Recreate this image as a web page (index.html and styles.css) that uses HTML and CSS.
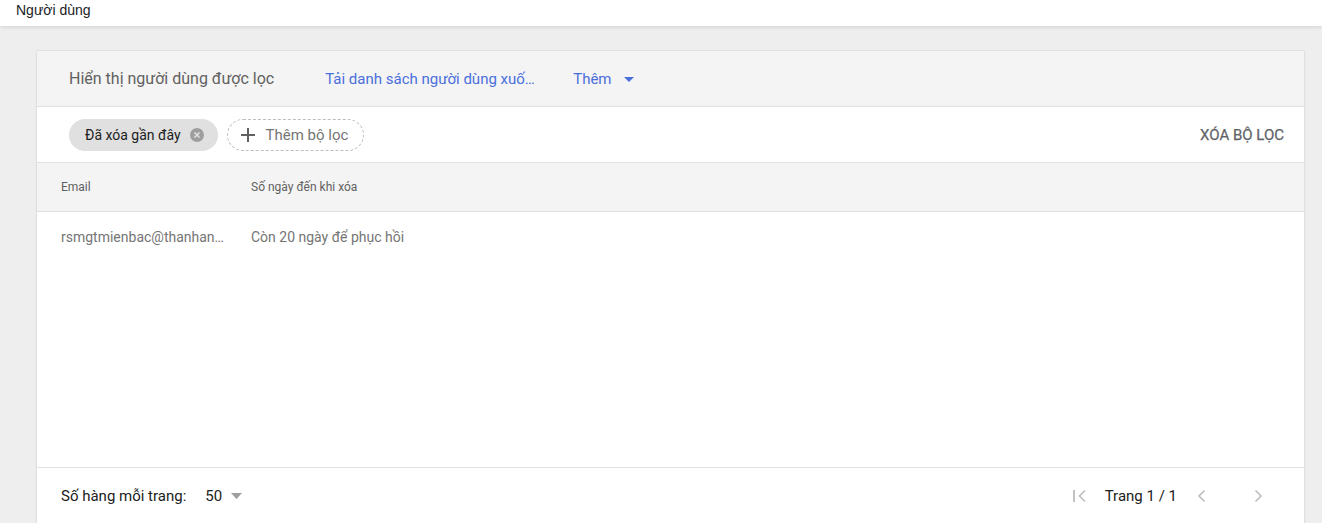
FILE: index.html
```html
<!DOCTYPE html>
<html lang="vi">
<head>
<meta charset="utf-8">
<title>Người dùng</title>
<link rel="stylesheet" href="styles.css">
</head>
<body>
<header class="topbar"><span class="topbar-title">Người dùng</span></header>
<main class="main">
  <section class="card">
    <div class="card-head">
      <span class="card-title">Hiển thị người dùng được lọc</span>
      <a class="link download">Tải danh sách người dùng xuống</a>
      <a class="link more">Thêm
        <svg class="caret" width="10" height="5" viewBox="0 0 10 5"><path d="M0 0h10L5 5z" fill="currentColor"/></svg>
      </a>
    </div>
    <div class="filters">
      <span class="chip">Đã xóa gần đây
        <svg class="chip-x" width="14" height="14" viewBox="0 0 14 14"><circle cx="7" cy="7" r="7" fill="#9e9e9e"/><path d="M4.5 4.5l5 5M9.5 4.5l-5 5" stroke="#e0e0e0" stroke-width="1.6"/></svg>
      </span>
      <span class="chip-add">
        <svg class="plus" width="14" height="14" viewBox="0 0 14 14"><path d="M7 0v14M0 7h14" stroke="#616161" stroke-width="2"/></svg>
        Thêm bộ lọc
      </span>
      <span class="clear">XÓA BỘ LỌC</span>
    </div>
    <div class="thead">
      <span class="col-email">Email</span>
      <span class="col-days">Số ngày đến khi xóa</span>
    </div>
    <div class="tbody">
      <div class="row">
        <span class="col-email cell-trunc">rsmgtmienbac@thanhanhgroup.vn</span>
        <span class="col-days">Còn 20 ngày để phục hồi</span>
      </div>
    </div>
    <div class="footer">
      <span class="rows-label">Số hàng mỗi trang:</span>
      <span class="rows-select">50
        <svg width="11" height="6" viewBox="0 0 11 6"><path d="M0 0h11L5.5 6z" fill="#9e9e9e"/></svg>
      </span>
      <div class="pager">
        <svg class="pg-icon" width="16" height="16" viewBox="0 0 16 16"><path d="M2 2v12" stroke="#bdbdbd" stroke-width="1.8"/><path d="M13 2.5L7.5 8l5.5 5.5" stroke="#bdbdbd" stroke-width="1.6" fill="none"/></svg>
        <span class="pg-text">Trang 1 / 1</span>
        <svg class="pg-icon prev" width="16" height="16" viewBox="0 0 16 16"><path d="M10.5 2.5L5 8l5.5 5.5" stroke="#bdbdbd" stroke-width="1.6" fill="none"/></svg>
        <svg class="pg-icon next" width="16" height="16" viewBox="0 0 16 16"><path d="M5.5 2.5L11 8l-5.5 5.5" stroke="#bdbdbd" stroke-width="1.6" fill="none"/></svg>
      </div>
    </div>
  </section>
</main>
</body>
</html>
```

FILE: styles.css
```css
* { box-sizing: border-box; }
html, body { margin: 0; padding: 0; }
body {
  background: #eeeeee;
  font-family: Roboto, "Noto Sans", Arial, sans-serif;
  height: 523px;
  overflow: hidden;
}
.topbar {
  height: 26px;
  background: #fff;
  box-shadow: 0 1px 4px rgba(0,0,0,0.12);
  display: flex;
  align-items: center;
  padding-left: 16px;
  position: relative;
  z-index: 1;
}
.topbar-title {
  font-family: "Liberation Sans", Arial, sans-serif;
  font-size: 14px;
  color: #202124;
  margin-top: -6px;
}
.main {
  padding: 24px 17px 0 36px;
}
.card {
  background: #fff;
  border: 1px solid #e0e0e0;
  box-shadow: 0 1px 2px rgba(0,0,0,0.06);
  border-radius: 2px;
}
.card-head {
  height: 56px;
  background: #f4f4f4;
  border-bottom: 1px solid #e0e0e0;
  display: flex;
  align-items: center;
  padding-left: 32px;
}
.card-title {
  font-size: 16px;
  color: #616161;
  margin-right: 51px;
}
.link {
  font-size: 15px;
  color: #4a6fdc;
  cursor: pointer;
}
.download {
  display: inline-block;
  max-width: 211px;
  white-space: nowrap;
  overflow: hidden;
  text-overflow: ellipsis;
  margin-right: 37px;
}
.more {
  display: inline-flex;
  align-items: center;
  gap: 12px;
}
.caret { margin-top: 1px; }
.filters {
  height: 56px;
  border-bottom: 1px solid #e0e0e0;
  display: flex;
  align-items: center;
  padding: 0 20px 0 32px;
}
.chip {
  height: 32px;
  border-radius: 16px;
  background: #e0e0e0;
  display: inline-flex;
  align-items: center;
  gap: 9px;
  padding: 0 14px 0 16px;
  font-size: 14px;
  color: #212121;
  margin-right: 9px;
}
.chip-add {
  height: 32px;
  border-radius: 16px;
  border: 1px dashed #bdbdbd;
  display: inline-flex;
  align-items: center;
  gap: 11px;
  padding: 0 15px 0 13px;
  font-size: 15px;
  color: #757575;
}
.clear {
  margin-left: auto;
  font-size: 15px;
  font-weight: 400;
  color: #5f6368;
  -webkit-text-stroke: 0.25px #5f6368;
}
.thead {
  height: 49px;
  background: #f4f4f4;
  border-bottom: 1px solid #e0e0e0;
  display: flex;
  align-items: center;
  padding-left: 24px;
  font-size: 12px;
  font-weight: 400;
  color: #616161;
}
.col-email { width: 190px; flex: none; }
.tbody {
  height: 256px;
  border-bottom: 1px solid #e0e0e0;
}
.row {
  height: 50px;
  display: flex;
  align-items: center;
  padding-left: 24px;
  font-size: 14px;
  color: #757575;
}
.cell-trunc {
  white-space: nowrap;
  overflow: hidden;
  text-overflow: ellipsis;
  padding-right: 25px;
}
.footer {
  height: 56px;
  display: flex;
  align-items: center;
  padding: 0 38px 0 24px;
  font-size: 15px;
  color: #212121;
}
.rows-label { margin-right: 19px; }
.rows-select {
  display: inline-flex;
  align-items: center;
  gap: 9px;
}
.pager {
  margin-left: auto;
  display: flex;
  align-items: center;
}
.pg-text { margin: 0 17px 0 17px; }
.pg-icon.prev { margin-right: 40px; }
```
